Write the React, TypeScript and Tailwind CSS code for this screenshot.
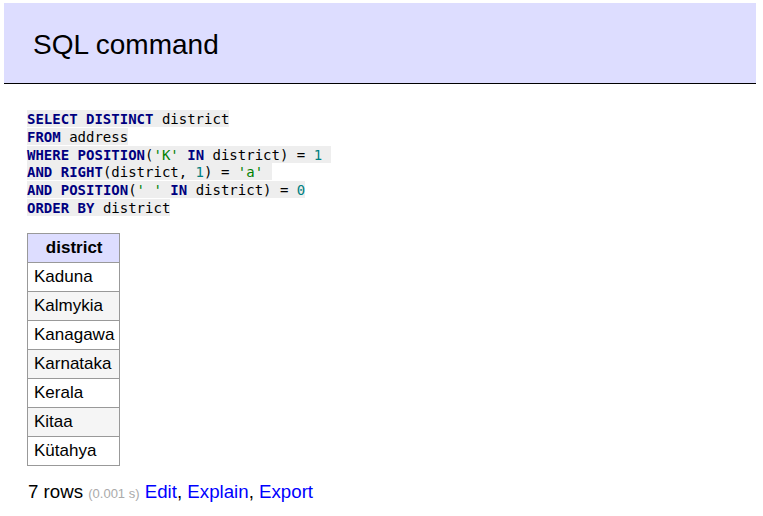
const kw = 'font-bold text-[#000080]';
const str = 'text-[#008000]';
const num = 'text-[#008080]';

const rows = ['Kaduna', 'Kalmykia', 'Kanagawa', 'Karnataka', 'Kerala', 'Kitaa', 'Kütahya'];

function Line({ children }: { children: React.ReactNode }) {
  return (
    <div className="h-[17.8px] leading-[17.8px]">
      <span className="bg-[#eeeeee] whitespace-pre py-[0.5px]">{children}</span>
    </div>
  );
}

export default function App() {
  return (
    <div className="min-h-[516px] bg-white pt-[3px] text-black" style={{ fontFamily: '"Liberation Sans", Arial, sans-serif' }}>
      <div className="ml-[4px] mr-[7px] h-[80.5px] border-b border-black bg-[#ddddff] px-[29px] pt-[24px]">
        <h2 className="text-[28px] leading-[35px]">SQL command</h2>
      </div>

      <div className="ml-[27px] mt-[27px] text-[14px] text-black" style={{ fontFamily: '"DejaVu Sans Mono", monospace' }}>
        <Line>
          <span className={kw}>SELECT</span> <span className={kw}>DISTINCT</span> district
        </Line>
        <Line>
          <span className={kw}>FROM</span> address
        </Line>
        <Line>
          <span className={kw}>WHERE</span> <span className={kw}>POSITION</span>(<span className={str}>'K'</span>{' '}
          <span className={kw}>IN</span> district) = <span className={num}>1</span>{' '}
        </Line>
        <Line>
          <span className={kw}>AND</span> <span className={kw}>RIGHT</span>(district, <span className={num}>1</span>) ={' '}
          <span className={str}>'a'</span>{' '}
        </Line>
        <Line>
          <span className={kw}>AND</span> <span className={kw}>POSITION</span>(<span className={str}>' '</span>{' '}
          <span className={kw}>IN</span> district) = <span className={num}>0</span>
        </Line>
        <Line>
          <span className={kw}>ORDER</span> <span className={kw}>BY</span> district
        </Line>
      </div>

      <table className="ml-[27px] mt-[16px] border-collapse border border-[#999999] text-[17px]">
        <thead>
          <tr>
            <th className="border border-[#999999] bg-[#ddddff] pl-[6px] pr-[5px] py-[3px] text-center font-bold leading-[22px]">
              district
            </th>
          </tr>
        </thead>
        <tbody>
          {rows.map((r, i) => (
            <tr key={r} className={i % 2 === 1 ? 'bg-[#f5f5f5]' : 'bg-white'}>
              <td className="border border-[#999999] pl-[6px] pr-[5px] py-[3px] leading-[22px]">{r}</td>
            </tr>
          ))}
        </tbody>
      </table>

      <p className="ml-[28px] mt-[14px] text-[18.7px] leading-[23px]">
        7 rows <span className="text-[13px] text-[#aaaaaa]">(0.001 s)</span>{' '}
        <a className="text-[#0000ff]">Edit</a>, <a className="text-[#0000ff]">Explain</a>,{' '}
        <a className="text-[#0000ff]">Export</a>
      </p>
    </div>
  );
}
